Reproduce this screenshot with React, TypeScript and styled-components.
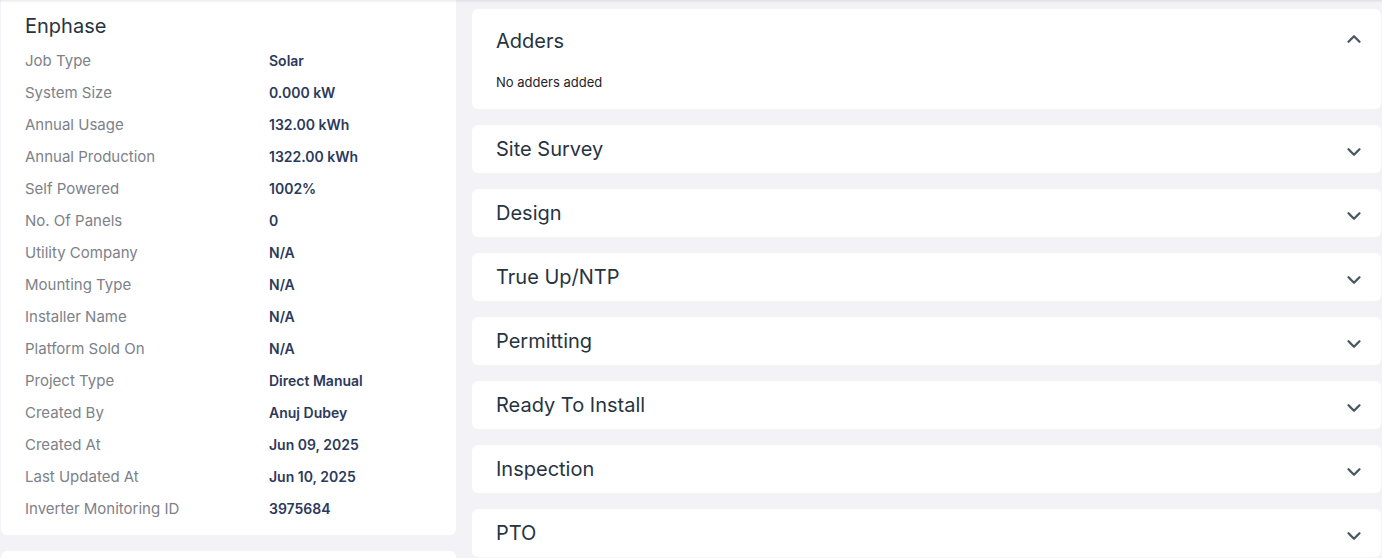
import React from "react";
import styled, { createGlobalStyle } from "styled-components";
import { ChevronDown, ChevronUp } from "lucide-react";

const Global = createGlobalStyle`
  * { box-sizing: border-box; }
  html, body { margin: 0; padding: 0; background: #f3f3f7; }
  body { font-family: Inter, "Noto Sans", "Liberation Sans", sans-serif; overflow: hidden; }
`;

const TopShade = styled.div`
  position: fixed;
  top: 0;
  left: 0;
  right: 0;
  height: 3px;
  background: linear-gradient(to bottom, rgba(0, 0, 0, 0.08), rgba(0, 0, 0, 0));
  pointer-events: none;
  z-index: 5;
`;

const Page = styled.div`
  display: grid;
  grid-template-columns: 455px 1fr;
  column-gap: 16px;
  padding: 0 1px;
  align-items: start;
`;

const LeftColumn = styled.div`
  display: flex;
  flex-direction: column;
  gap: 16px;
`;

const RightColumn = styled.div`
  display: flex;
  flex-direction: column;
  gap: 16px;
  padding-top: 9px;
`;

const InfoCard = styled.div<{ $flatTop?: boolean }>`
  background: #ffffff;
  border-radius: ${(p) => (p.$flatTop ? "0 0 6px 6px" : "6px")};
  padding: 12px 24px 11px;
`;

const CardTitle = styled.h2`
  margin: 0 0 4px;
  font-size: 20px;
  line-height: 28px;
  font-weight: 400;
  color: #27343f;
`;

const InfoRow = styled.div`
  display: grid;
  grid-template-columns: 244px 1fr;
  height: 32px;
  align-items: center;
`;

const Label = styled.span`
  font-size: 15px;
  color: #7d8189;
`;

const Value = styled.span`
  font-size: 14px;
  font-weight: 600;
  color: #2b3a5c;
`;

const StubCard = styled.div`
  background: #ffffff;
  border-radius: 6px;
  height: 40px;
`;

const Section = styled.div<{ $open?: boolean }>`
  background: #ffffff;
  border-radius: 6px;
  padding: ${(p) => (p.$open ? "16px 16px 16px 24px" : "12px 16px 12px 24px")};
  display: flex;
  flex-direction: column;
  gap: 15px;
`;

const SectionHeader = styled.div<{ $open?: boolean }>`
  display: flex;
  align-items: center;
  justify-content: space-between;
  height: ${(p) => (p.$open ? "32px" : "24px")};
`;

const SectionTitle = styled.span`
  font-size: 20px;
  font-weight: 400;
  color: #27343f;
`;

const SectionBody = styled.div`
  font-size: 13px;
  line-height: 20px;
  color: #1f2328;
  padding-bottom: 1px;
`;

const Icon = styled.span<{ $shift: number }>`
  display: flex;
  color: #4a5565;
  transform: translateY(${(p) => p.$shift}px);
`;

const info: [string, string][] = [
  ["Job Type", "Solar"],
  ["System Size", "0.000 kW"],
  ["Annual Usage", "132.00 kWh"],
  ["Annual Production", "1322.00 kWh"],
  ["Self Powered", "1002%"],
  ["No. Of Panels", "0"],
  ["Utility Company", "N/A"],
  ["Mounting Type", "N/A"],
  ["Installer Name", "N/A"],
  ["Platform Sold On", "N/A"],
  ["Project Type", "Direct Manual"],
  ["Created By", "Anuj Dubey"],
  ["Created At", "Jun 09, 2025"],
  ["Last Updated At", "Jun 10, 2025"],
  ["Inverter Monitoring ID", "3975684"],
];

const sections = [
  "Site Survey",
  "Design",
  "True Up/NTP",
  "Permitting",
  "Ready To Install",
  "Inspection",
  "PTO",
];

export default function App() {
  return (
    <>
      <Global />
      <TopShade />
      <Page>
        <LeftColumn>
          <InfoCard $flatTop>
            <CardTitle>Enphase</CardTitle>
            {info.map(([k, v]) => (
              <InfoRow key={k}>
                <Label>{k}</Label>
                <Value>{v}</Value>
              </InfoRow>
            ))}
          </InfoCard>
          <StubCard />
        </LeftColumn>
        <RightColumn>
          <Section $open>
            <SectionHeader $open>
              <SectionTitle>Adders</SectionTitle>
              <Icon $shift={-2}>
                <ChevronUp size={22} strokeWidth={2.5} />
              </Icon>
            </SectionHeader>
            <SectionBody>No adders added</SectionBody>
          </Section>
          {sections.map((s) => (
            <Section key={s}>
              <SectionHeader>
                <SectionTitle>{s}</SectionTitle>
                <Icon $shift={3}>
                  <ChevronDown size={22} strokeWidth={2.5} />
                </Icon>
              </SectionHeader>
            </Section>
          ))}
        </RightColumn>
      </Page>
    </>
  );
}
